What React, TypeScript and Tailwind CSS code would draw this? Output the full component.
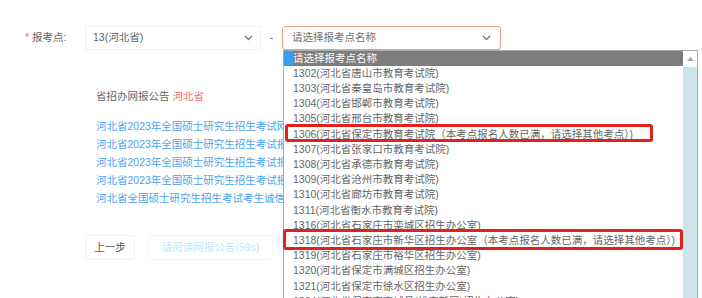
import React from "react";

const options = [
    "1302(河北省唐山市教育考试院)",
    "1303(河北省秦皇岛市教育考试院)",
    "1304(河北省邯郸市教育考试院)",
    "1305(河北省邢台市教育考试院)",
    "1306(河北省保定市教育考试院（本考点报名人数已满，请选择其他考点）)",
    "1307(河北省张家口市教育考试院)",
    "1308(河北省承德市教育考试院)",
    "1309(河北省沧州市教育考试院)",
    "1310(河北省廊坊市教育考试院)",
    "1311(河北省衡水市教育考试院)",
    "1316(河北省石家庄市栾城区招生办公室)",
    "1318(河北省石家庄市新华区招生办公室（本考点报名人数已满，请选择其他考点）)",
    "1319(河北省石家庄市裕华区招生办公室)",
    "1320(河北省保定市满城区招生办公室)",
    "1321(河北省保定市徐水区招生办公室)",
    "1324(河北省保定市容城县(雄安新区)招生办公室)",
];

const links = [
    "河北省2023年全国硕士研究生招生考试网上报名公告",
    "河北省2023年全国硕士研究生招生考试报名须知",
    "河北省2023年全国硕士研究生招生考试报考点信息",
    "河北省2023年全国硕士研究生招生考试报名流程",
    "河北省全国硕士研究生招生考试考生诚信考试承诺书",
];

function Chevron() {
    return (
        <svg width="9" height="6" viewBox="0 0 9 6" className="shrink-0">
            <polyline points="1,1 4.5,4.5 8,1" fill="none" stroke="#777" strokeWidth="1.4" />
        </svg>
    );
}

export default function App() {
    return (
        <div className="relative w-[702px] h-[298px] overflow-hidden bg-white font-['Liberation_Sans','Noto_Sans_CJK_SC',sans-serif] text-[10.5px] text-[#606266]">
            {/* form row */}
            <div className="flex items-center pt-[26px] h-[50px]">
                <div className="flex items-center w-[85px] pl-[25px]">
                    <span className="text-[#f56c6c] mr-[3px]">*</span>
                    <span>报考点:</span>
                </div>
                <div className="flex items-center justify-between w-[176px] h-[24px] border border-[#f0f2f5] px-[7px]">
                    <span>13(河北省)</span>
                    <Chevron />
                </div>
                <span className="w-[21px] text-center">-</span>
                <div className="flex items-center justify-between w-[219px] h-[24px] border border-[#eaa48e] rounded-[3px] px-[9px] text-[#707070]">
                    <span>请选择报考点名称</span>
                    <Chevron />
                </div>
            </div>

            {/* notice */}
            <div className="pl-[96px] pt-[37px] leading-[18px]">
                <div className="text-[#666]">
                    省招办网报公告 <span className="text-[#f56c6c]">河北省</span>
                </div>
                <div className="mt-[12px] w-[187px] overflow-hidden flex flex-col whitespace-nowrap text-[#4aa3f0]">
                    {links.map((l) => (
                        <span key={l}>{l}</span>
                    ))}
                </div>
            </div>

            {/* buttons */}
            <div className="flex gap-[13px] pl-[85px] mt-[28px]">
                <div className="flex items-center justify-center w-[50px] h-[25px] border border-[#eef4f6] rounded-[2px] text-[#555]">
                    上一步
                </div>
                <div className="flex items-center justify-center w-[125px] h-[25px] border border-[#eef7fa] rounded-[2px] text-[#c3e6f7]">
                    请阅读网报公告(59s)
                </div>
            </div>

            {/* open select list */}
            <div className="absolute left-[283px] top-[50px] w-[415px] h-[260px] bg-white border border-[#a9a9a9] flex">
                <div className="flex-1 min-w-0 overflow-hidden flex flex-col text-[#666] whitespace-nowrap">
                    <div className="flex h-[15.2px] items-center bg-[#7d7d7d] text-white">
                        <span className="w-[9px] h-full bg-[#3a9ef5]" />
                        <span>请选择报考点名称</span>
                    </div>
                    {options.map((o) => (
                        <div key={o} className="flex h-[15.2px] items-center pl-[9px]">
                            {o}
                        </div>
                    ))}
                </div>
                <div className="w-[14px] flex flex-col bg-[#cbe5e8]">
                    <div className="h-[16px] bg-white flex items-center justify-center">
                        <svg width="7" height="4" viewBox="0 0 7 4">
                            <polygon points="0,4 3.5,0 7,4" fill="#aaa" />
                        </svg>
                    </div>
                </div>
            </div>

            {/* annotations */}
            <div className="absolute left-[285px] top-[124px] w-[368px] h-[18px] border-[3px] border-[#e3211c] rounded-[3px]" />
            <div className="absolute left-[283px] top-[229px] w-[400px] h-[21px] border-[3px] border-[#e3211c] rounded-[3px]" />
        </div>
    );
}
